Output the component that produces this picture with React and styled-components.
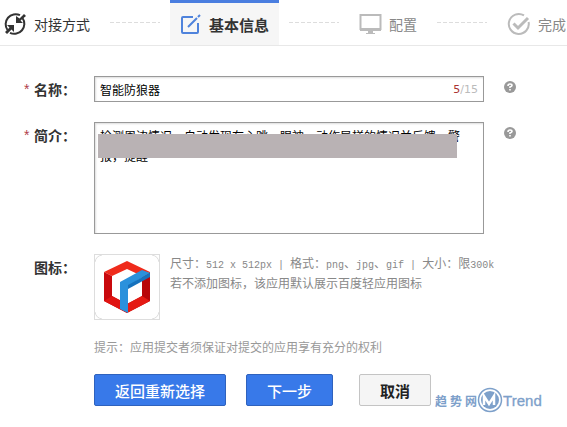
import React from 'react'
import styled, { createGlobalStyle } from 'styled-components';


const GlobalStyle = createGlobalStyle`
    * {
        box-sizing:border-box;
    }
    body {
        margin:0;
        background-color:#fff;
        color:#333;
        font-family:"Liberation Sans", "Noto Sans CJK SC", sans-serif;
        font-size:12px;
        overflow-x:hidden;
    }
    button, input, textarea {
        font-family:inherit;
    }
`;

const Steps = styled.ol`
    display:flex;
    height:46px;
    margin:0;
    padding:0;
    list-style:none;
    border-bottom:1px solid #e8e8e8;
    overflow:hidden;
`;

const Step = styled.li`
    display:flex;
    flex:none;
    align-items:center;
    gap:${({ $active }) => $active ? '8px' : '7px'};
    padding:${({ $active }) => $active ? '0 10px' : '2px 3px 0'};
    border-top:${({ $active }) => $active ? '3px solid #4a7ee0' : '0'};
    background-color:${({ $active }) => $active ? '#f6f6f6' : 'transparent'};
    color:${({ $muted }) => $muted ? '#888' : '#333'};
    font-size:${({ $active }) => $active ? '15px' : '14px'};
    font-weight:${({ $active }) => $active ? 'bold' : 'normal'};
    white-space:nowrap;

    svg {
        flex:none;
    }
`;

const Dash = styled.li`
    flex:none;
    width:50px;
    height:1px;
    margin:22px ${({ $after }) => $after}px 0 ${({ $before }) => $before}px;
    background:repeating-linear-gradient(90deg, #ddd 0 4px, transparent 4px 6px);
`;

const Form = styled.form`
    padding:30px 48px 20px 24px;
`;

const Row = styled.div`
    display:grid;
    grid-template-columns:70px minmax(0, 390px) 32px;
    margin-bottom:${({ $gap }) => $gap}px;
`;

const Label = styled.label`
    display:flex;
    height:26px;
    align-items:center;
    color:#333;
    font-size:14px;
    font-weight:bold;
    white-space:nowrap;

    &:before {
        content:'${({ $required }) => $required ? '*' : ''}';
        width:10px;
        color:#b0404a;
        font-size:14px;
        font-weight:normal;
        line-height:14px;
    }
`;

const InputBox = styled.div`
    display:flex;
    height:26px;
    align-items:center;
    padding:0 5px;
    border:1px solid #999;
    box-shadow:inset 1px 1px 2px #ddd;
`;

const TextInput = styled.input`
    flex:1;
    min-width:0;
    padding:0;
    border:0;
    outline:0;
    background:transparent;
    color:#000;
    font-size:12px;
`;

const Counter = styled.span`
    color:#bbb;
    font-family:"DejaVu Sans", sans-serif;
    font-size:11px;

    b {
        color:#a33;
        font-weight:normal;
    }
`;

const AreaBox = styled.div`
    position:relative;
`;

const TextArea = styled.textarea`
    display:block;
    width:100%;
    height:112px;
    padding:4px 5px;
    border:1px solid #999;
    outline:0;
    box-shadow:inset 1px 1px 2px #ddd;
    resize:none;
    overflow:hidden;
    color:#000;
    font-size:12px;
    line-height:20px;
`;

const Cover = styled.div`
    position:absolute;
    top:12px;
    left:4px;
    right:27px;
    height:24px;
    background-color:#b9b2b4;
`;

const HelpButton = styled.button`
    display:block;
    width:12px;
    height:12px;
    margin:5px 0 0 20px;
    padding:0;
    border:0;
    background:transparent;
    cursor:pointer;

    svg {
        display:block;
    }
`;

const IconArea = styled.div`
    display:flex;
    grid-column:2 / 4;
    gap:10px;
`;

const IconFrame = styled.div`
    flex:none;
    width:66px;
    height:66px;
    border:1px solid #ddd;
`;

const IconHint = styled.p`
    margin:0;
    color:#888;
    font-size:12px;
    line-height:20px;
    white-space:nowrap;
`;

const Latin = styled.span`
    font-family:"Liberation Mono", monospace;
    font-size:10px;
    line-height:1;
    white-space:pre;
`;

const Notice = styled.p`
    margin:0 0 16px 70px;
    color:#999;
    font-size:12px;
    line-height:20px;
`;

const Actions = styled.div`
    display:flex;
    margin-left:70px;
`;

const Button = styled.button`
    height:32px;
    margin-right:${({ $after }) => $after}px;
    padding:0 20px;
    border:1px solid ${({ $primary }) => $primary ? '#2f62bd' : '#c4c4c4'};
    border-radius:2px;
    background-color:${({ $primary }) => $primary ? '#3879e9' : '#f5f5f5'};
    color:${({ $primary }) => $primary ? '#fff' : '#222'};
    font-size:15px;
    font-weight:${({ $primary }) => $primary ? '500' : 'bold'};
    white-space:nowrap;
    cursor:pointer;
`;

const Brand = styled.div`
    display:flex;
    align-items:center;
    align-self:flex-end;
    height:26px;
    margin-bottom:-7px;
    color:#7da0ca;
    white-space:nowrap;
`;

const BrandName = styled.span`
    display:flex;
    gap:3px;
    font-size:12px;
    font-weight:bold;
`;

const BrandWord = styled.span`
    font-size:15px;
    -webkit-text-stroke:0.3px #7da0ca;
`;

const SyncIcon = () => (
    <svg width="24" height="24" viewBox="0 0 24 24">
        <path d="M4.500 18A10 10 0 0 1 17 3.200M19.500 6A10 10 0 0 1 7 20.800" fill="none" stroke="#333" strokeWidth="2" />
        <path d="M13 4v7h7l-2.500-2.500L23 4l-2-2-4.500 4.500zM11 20v-7H4l2.500 2.500L2 20l2 2 4.500-4.500z" fill="#333" />
    </svg>
);

const EditIcon = () => (
    <svg width="21" height="21" viewBox="0 0 21 21" fill="none" stroke="#4f83dc" strokeWidth="2">
        <path d="M13 3H3Q2 3 2 4v14q0 1 1 1h14q1 0 1-1V9" />
        <path d="M8 13l9-9M18 3l2-2" />
    </svg>
);

const ScreenIcon = () => (
    <svg width="23" height="22" viewBox="0 0 23 22">
        <path d="M1.500 2h20v14h-20z" fill="none" stroke="#bbb" strokeWidth="2" />
        <path d="M1 15h21v3H1zM9 18h5v2h2v1H7v-1h2z" fill="#bbb" />
    </svg>
);

const DoneIcon = () => (
    <svg width="24" height="24" viewBox="0 0 24 24" fill="none" stroke="#bbb">
        <path d="M21.600 10A10 10 0 1 1 17 3.400" strokeWidth="2" />
        <path d="M6.500 11.500l4.500 4.500L21 6" strokeWidth="3" />
    </svg>
);

const HelpIcon = () => (
    <svg width="12" height="12" viewBox="0 0 12 12">
        <circle cx="6" cy="6" r="6" fill="#999" />
        <path d="M4 5q0-2 2-2t2 1.600Q8 5.600 6 6v1" fill="none" stroke="#fff" strokeWidth="1.600" />
        <path d="M5.200 8h1.600v1.600H5.200z" fill="#fff" />
    </svg>
);

const CubeIcon = () => (
    <svg width="64" height="64" viewBox="0 0 64 64">
        <path d="M0 7Q1 1 7 0M57 0q6 1 7 7M0 57q1 6 7 7M57 64q6-1 7-7" fill="none" stroke="#ddd" />
        <path d="M32 6L9 17l8 4 15-7 15 7 8-4z" fill="#ef2b1c" />
        <path d="M9 17v29l23 12v-9l-15-8V21z" fill="#c9090d" />
        <path d="M9 46l8-5 15 8v9z" fill="#e01412" />
        <path d="M55 17v29L32 58v-9l15-8V21z" fill="#b80609" />
        <path d="M32 49l15-8 8 5-23 12z" fill="#e51b14" />
        <path d="M25 27l22-12 8 3-22 13v27l-8-4z" fill="#2a91dc" />
        <path d="M33 30l22-12v4L33 34z" fill="#1672bd" />
    </svg>
);

const BrandIcon = () => (
    <svg width="26" height="26" viewBox="0 0 26 26" fill="none" stroke="#7da0ca">
        <circle cx="13" cy="13" r="11.500" strokeWidth="1.500" />
        <circle cx="13" cy="13" r="9" fill="#7da0ca" stroke="none" />
        <path d="M7 18V9l5 8 5-8v9" stroke="#fff" strokeWidth="2.500" />
    </svg>
);

const Help = ({ about }) => (
    <HelpButton type="button" aria-label={about}>
        <HelpIcon />
    </HelpButton>
);

const description = '检测周边情况，自动发现存心跳，眼神，动作异样的情况并反馈，警报，提醒';

const App = () => {
    return (
        <>
            <GlobalStyle />
            <Steps>
                <Step><SyncIcon />对接方式</Step>
                <Dash $before={17} $after={10} />
                <Step $active><EditIcon />基本信息</Step>
                <Dash $before={10} $after={17} />
                <Step $muted><ScreenIcon />配置</Step>
                <Dash $before={17} $after={17} />
                <Step $muted><DoneIcon />完成</Step>
            </Steps>
            <Form onSubmit={e => e.preventDefault()}>
                <Row $gap={20}>
                    <Label htmlFor="name" $required>名称：</Label>
                    <InputBox>
                        <TextInput id="name" defaultValue="智能防狼器" maxLength={15} />
                        <Counter><b>5</b>/15</Counter>
                    </InputBox>
                    <Help about="名称" />
                </Row>
                <Row $gap={20}>
                    <Label htmlFor="intro" $required>简介：</Label>
                    <AreaBox>
                        <TextArea id="intro" defaultValue={description} />
                        <Cover />
                    </AreaBox>
                    <Help about="简介" />
                </Row>
                <Row $gap={18}>
                    <Label as="span">图标：</Label>
                    <IconArea>
                        <IconFrame><CubeIcon /></IconFrame>
                        <IconHint>
                            尺寸：<Latin>512 x 512px | </Latin>格式：<Latin>png</Latin>、<Latin>jpg</Latin>、<Latin>gif | </Latin>大小：限<Latin>300k</Latin>
                            <br />
                            若不添加图标，该应用默认展示百度轻应用图标
                        </IconHint>
                    </IconArea>
                </Row>
                <Notice>提示：应用提交者须保证对提交的应用享有充分的权利</Notice>
                <Actions>
                    <Button type="button" $primary $after={20}>返回重新选择</Button>
                    <Button type="submit" $primary $after={26}>下一步</Button>
                    <Button type="button" $after={4}>取消</Button>
                    <Brand>
                        <BrandName><span>趋</span><span>势</span><span>网</span></BrandName>
                        <BrandIcon />
                        <BrandWord>Trend</BrandWord>
                    </Brand>
                </Actions>
            </Form>
        </>
    )
}

export default App;
